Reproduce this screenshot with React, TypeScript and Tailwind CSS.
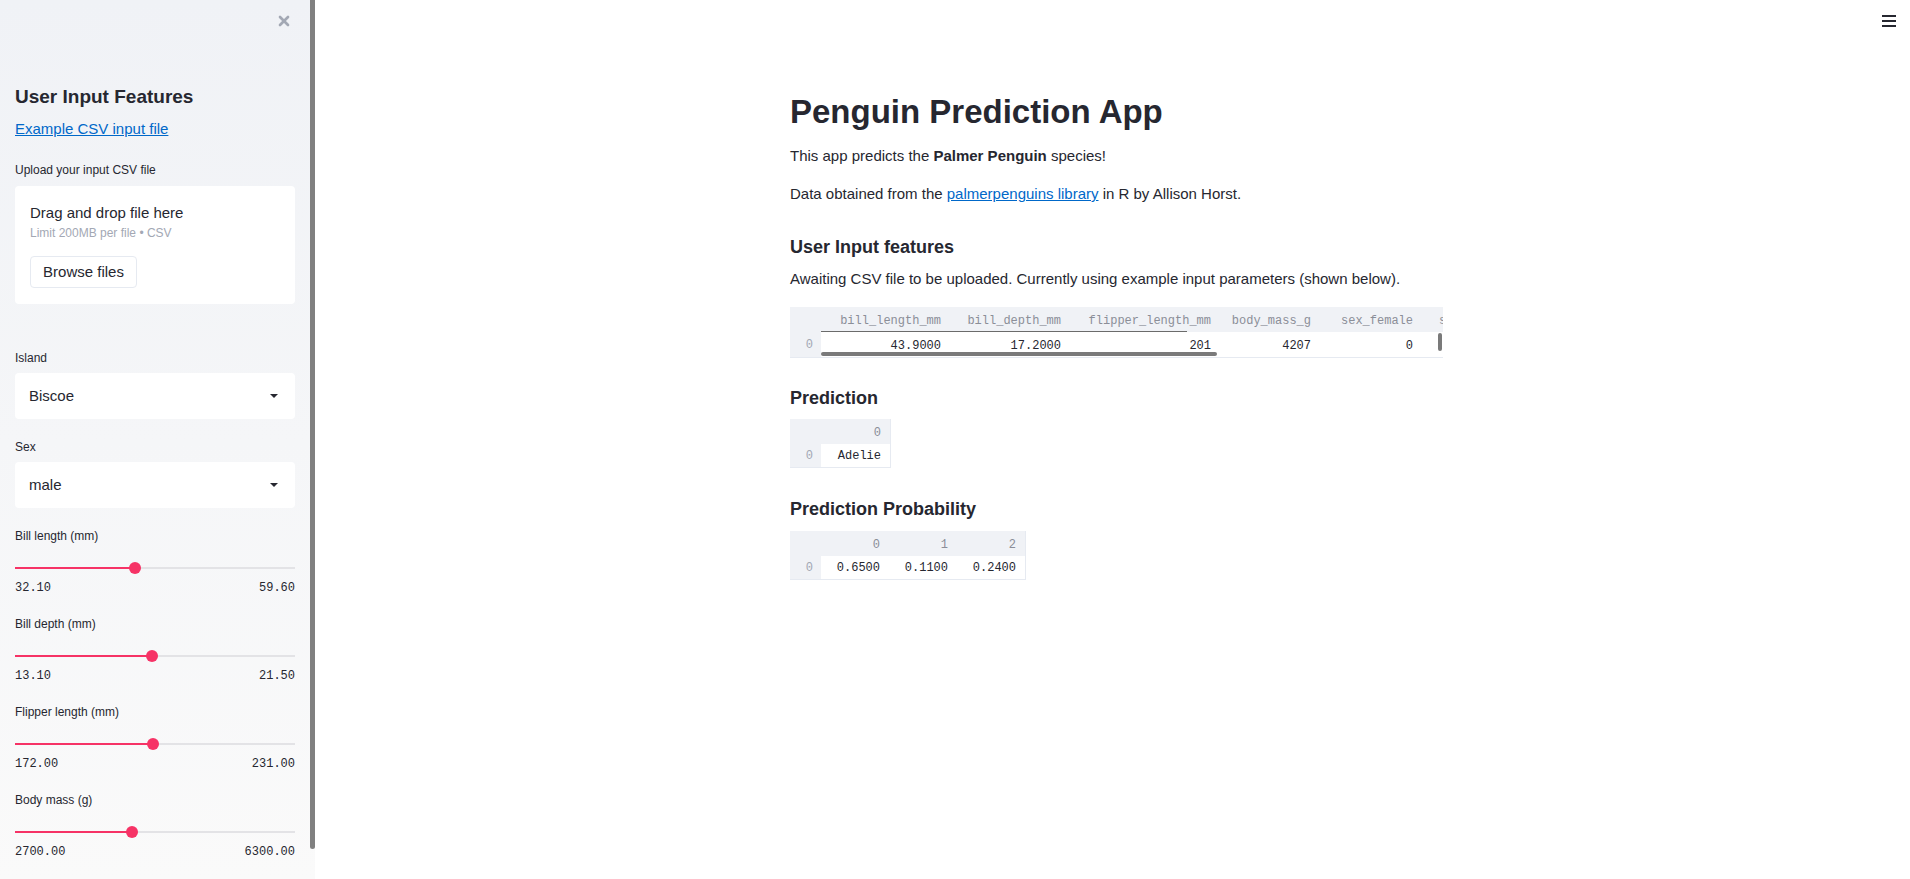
import React from 'react'
import { X } from 'lucide-react'

const sans = { fontFamily: '"Liberation Sans", Arial, sans-serif' }
const mono = { fontFamily: '"Liberation Mono", "Courier New", monospace' }

type SliderProps = { label: string; min: string; max: string; pct: number }

const Slider = ({ label, min, max, pct }: SliderProps) => {
  return (
    <div className="pb-[20px]">
      <div className="text-[12px] leading-[16px] text-[#262730]">{label}</div>
      <div className="relative mt-[18px] h-[12px] flex items-center">
        <div className="h-[2px] w-full bg-[#e3e3e6]" />
        <div className="absolute left-0 h-[2px] bg-[#f63366]" style={{ width: `${pct}%` }} />
        <div
          className="absolute h-[12px] w-[12px] -ml-[6px] rounded-full bg-[#f63366]"
          style={{ left: `${pct}%` }}
        />
      </div>
      <div className="mt-[6px] flex justify-between text-[12px] leading-[16px] text-[#262730]" style={mono}>
        <span>{min}</span>
        <span>{max}</span>
      </div>
    </div>
  )
}

const SelectBox = ({ label, value }: { label: string; value: string }) => {
  return (
    <div>
      <div className="text-[12px] leading-[16px] text-[#262730]">{label}</div>
      <div className="mt-[7px] h-[46px] rounded-[4px] bg-white flex items-center justify-between pl-[14px] pr-[17px]">
        <span className="text-[15px] text-[#262730]">{value}</span>
        <span className="w-0 h-0 border-l-[4px] border-r-[4px] border-t-[4px] border-l-transparent border-r-transparent border-t-[#262730]" />
      </div>
    </div>
  )
}

const Sidebar = () => {
  return (
    <aside className="relative w-[315px] shrink-0 h-full bg-gradient-to-b from-[#f0f2f6] to-[#fafafa]">
      <div className="pl-[15px] pr-[20px]">
        <div className="flex justify-end pt-[13px] pr-[3px] h-[28px]">
          <X size={16} strokeWidth={4} className="text-[#a3a8b4]" />
        </div>
        <h2 className="mt-[57px] text-[19px] leading-[24px] font-bold text-[#262730]">User Input Features</h2>
        <a href="#" className="block mt-[9px] text-[15px] leading-[22px] text-[#0068c9] underline">
          Example CSV input file
        </a>
        <div className="mt-[22px] text-[12px] leading-[16px] text-[#262730]">Upload your input CSV file</div>
        <div className="mt-[8px] h-[118px] rounded-[4px] bg-white px-[15px] pt-[17px]">
          <div className="text-[15px] leading-[20px] text-[#262730]">Drag and drop file here</div>
          <div className="mt-[2px] text-[12px] leading-[16px] text-[#a3a8b4]">Limit 200MB per file • CSV</div>
          <button className="mt-[15px] h-[32px] w-[107px] rounded-[4px] border border-[#e6eaf1] bg-white text-[15px] text-[#262730]">
            Browse files
          </button>
        </div>
        <div className="mt-[46px]">
          <SelectBox label="Island" value="Biscoe" />
        </div>
        <div className="mt-[20px]">
          <SelectBox label="Sex" value="male" />
        </div>
        <div className="mt-[20px]">
          <Slider label="Bill length (mm)" min="32.10" max="59.60" pct={42.9} />
          <Slider label="Bill depth (mm)" min="13.10" max="21.50" pct={48.8} />
          <Slider label="Flipper length (mm)" min="172.00" max="231.00" pct={49.2} />
          <Slider label="Body mass (g)" min="2700.00" max="6300.00" pct={41.9} />
        </div>
      </div>
      <div className="absolute right-0 top-0 h-[849px] w-[5px] rounded-b-[3px] bg-[#808080]" />
    </aside>
  )
}

type Col = { name: string; width: number; value: string }

const DataTable = ({ cols, pr = 9 }: { cols: Col[]; pr?: number }) => {
  return (
    <div className="flex border-r border-b border-[#e6eaf1] text-[12px]" style={mono}>
      <div className="w-[31px] shrink-0 bg-[#f0f2f6]">
        <div className="h-[25px]" />
        <div className="h-[23px] pt-[1px] flex items-center justify-end pr-[8px] text-[#a3a8b4]">0</div>
      </div>
      {cols.map((c) => (
        <div key={c.name} className="shrink-0" style={{ width: c.width }}>
          <div className="h-[25px] pt-[3px] bg-[#f0f2f6] flex items-center justify-end text-[#8b8e98]" style={{ paddingRight: pr }}>
            {c.name}
          </div>
          <div className="h-[23px] pt-[1px] flex items-center justify-end text-[#262730]" style={{ paddingRight: pr }}>
            {c.value}
          </div>
        </div>
      ))}
    </div>
  )
}

const InputTable = () => {
  const cols: Col[] = [
    { name: 'bill_length_mm', width: 133, value: '43.9000' },
    { name: 'bill_depth_mm', width: 120, value: '17.2000' },
    { name: 'flipper_length_mm', width: 150, value: '201' },
    { name: 'body_mass_g', width: 100, value: '4207' },
    { name: 'sex_female', width: 102, value: '0' },
  ]
  return (
    <div className="relative w-[653px] overflow-hidden border-b border-[#e6eaf1] text-[12px]" style={mono}>
      <div className="flex">
        <div className="w-[31px] shrink-0 bg-[#f0f2f6]">
          <div className="h-[25px]" />
          <div className="h-[25px] flex items-center justify-end pr-[8px] text-[#a3a8b4]">0</div>
        </div>
        {cols.map((c) => (
          <div key={c.name} className="shrink-0" style={{ width: c.width }}>
            <div className="h-[25px] pt-[2px] bg-[#f0f2f6] flex items-center justify-end pr-[13px] text-[#8b8e98]">{c.name}</div>
            <div className="h-[25px] pt-[2px] flex items-center justify-end pr-[13px] text-[#262730]">{c.value}</div>
          </div>
        ))}
        <div className="w-[100px] shrink-0">
          <div className="h-[25px] pt-[2px] bg-[#f0f2f6] flex items-center pl-[13px] text-[#8b8e98]">sex_male</div>
          <div className="h-[25px]" />
        </div>
      </div>
      <div className="absolute left-[31px] top-[24px] h-[1px] w-[366px] bg-[#6b6b6b]" />
      <div className="absolute left-[31px] bottom-[1px] h-[4px] w-[396px] rounded-[2px] bg-[#7a7a7a]" />
      <div className="absolute right-[1px] top-[26px] h-[18px] w-[4px] rounded-[2px] bg-[#7a7a7a]" />
    </div>
  )
}

export default function App() {
  return (
    <div className="relative flex h-[879px] w-full overflow-hidden bg-white" style={sans}>
      <Sidebar />
      <main className="relative flex-1 h-full">
        <div className="absolute right-[14px] top-[15px] flex flex-col gap-[3px]">
          <span className="block h-[2px] w-[14px] bg-[#262730]" />
          <span className="block h-[2px] w-[14px] bg-[#262730]" />
          <span className="block h-[2px] w-[14px] bg-[#262730]" />
        </div>
        <div className="ml-[475px] w-[653px] pt-[90px] text-[#262730]">
          <h1 className="text-[33px] leading-[44px] font-bold">Penguin Prediction App</h1>
          <p className="mt-[10px] text-[15px] leading-[24px]">
            This app predicts the <b>Palmer Penguin</b> species!
          </p>
          <p className="mt-[14px] text-[15px] leading-[24px]">
            Data obtained from the{' '}
            <a href="#" className="text-[#0068c9] underline">palmerpenguins library</a> in R by Allison Horst.
          </p>
          <h3 className="mt-[27px] text-[18px] leading-[28px] font-bold">User Input features</h3>
          <p className="mt-[6px] text-[15px] leading-[24px]">
            Awaiting CSV file to be uploaded. Currently using example input parameters (shown below).
          </p>
          <div className="mt-[16px]">
            <InputTable />
          </div>
          <h3 className="mt-[26px] text-[18px] leading-[28px] font-bold">Prediction</h3>
          <div className="mt-[7px] flex">
            <DataTable cols={[{ name: '0', width: 69, value: 'Adelie' }]} />
          </div>
          <h3 className="mt-[27px] text-[18px] leading-[28px] font-bold">Prediction Probability</h3>
          <div className="mt-[8px] flex">
            <DataTable
              cols={[
                { name: '0', width: 68, value: '0.6500' },
                { name: '1', width: 68, value: '0.1100' },
                { name: '2', width: 68, value: '0.2400' },
              ]}
            />
          </div>
        </div>
        <div className="absolute left-[475px] top-[875px] text-[12px] text-[#c4c6cc]">
          Made with Streamlit
        </div>
      </main>
    </div>
  )
}
